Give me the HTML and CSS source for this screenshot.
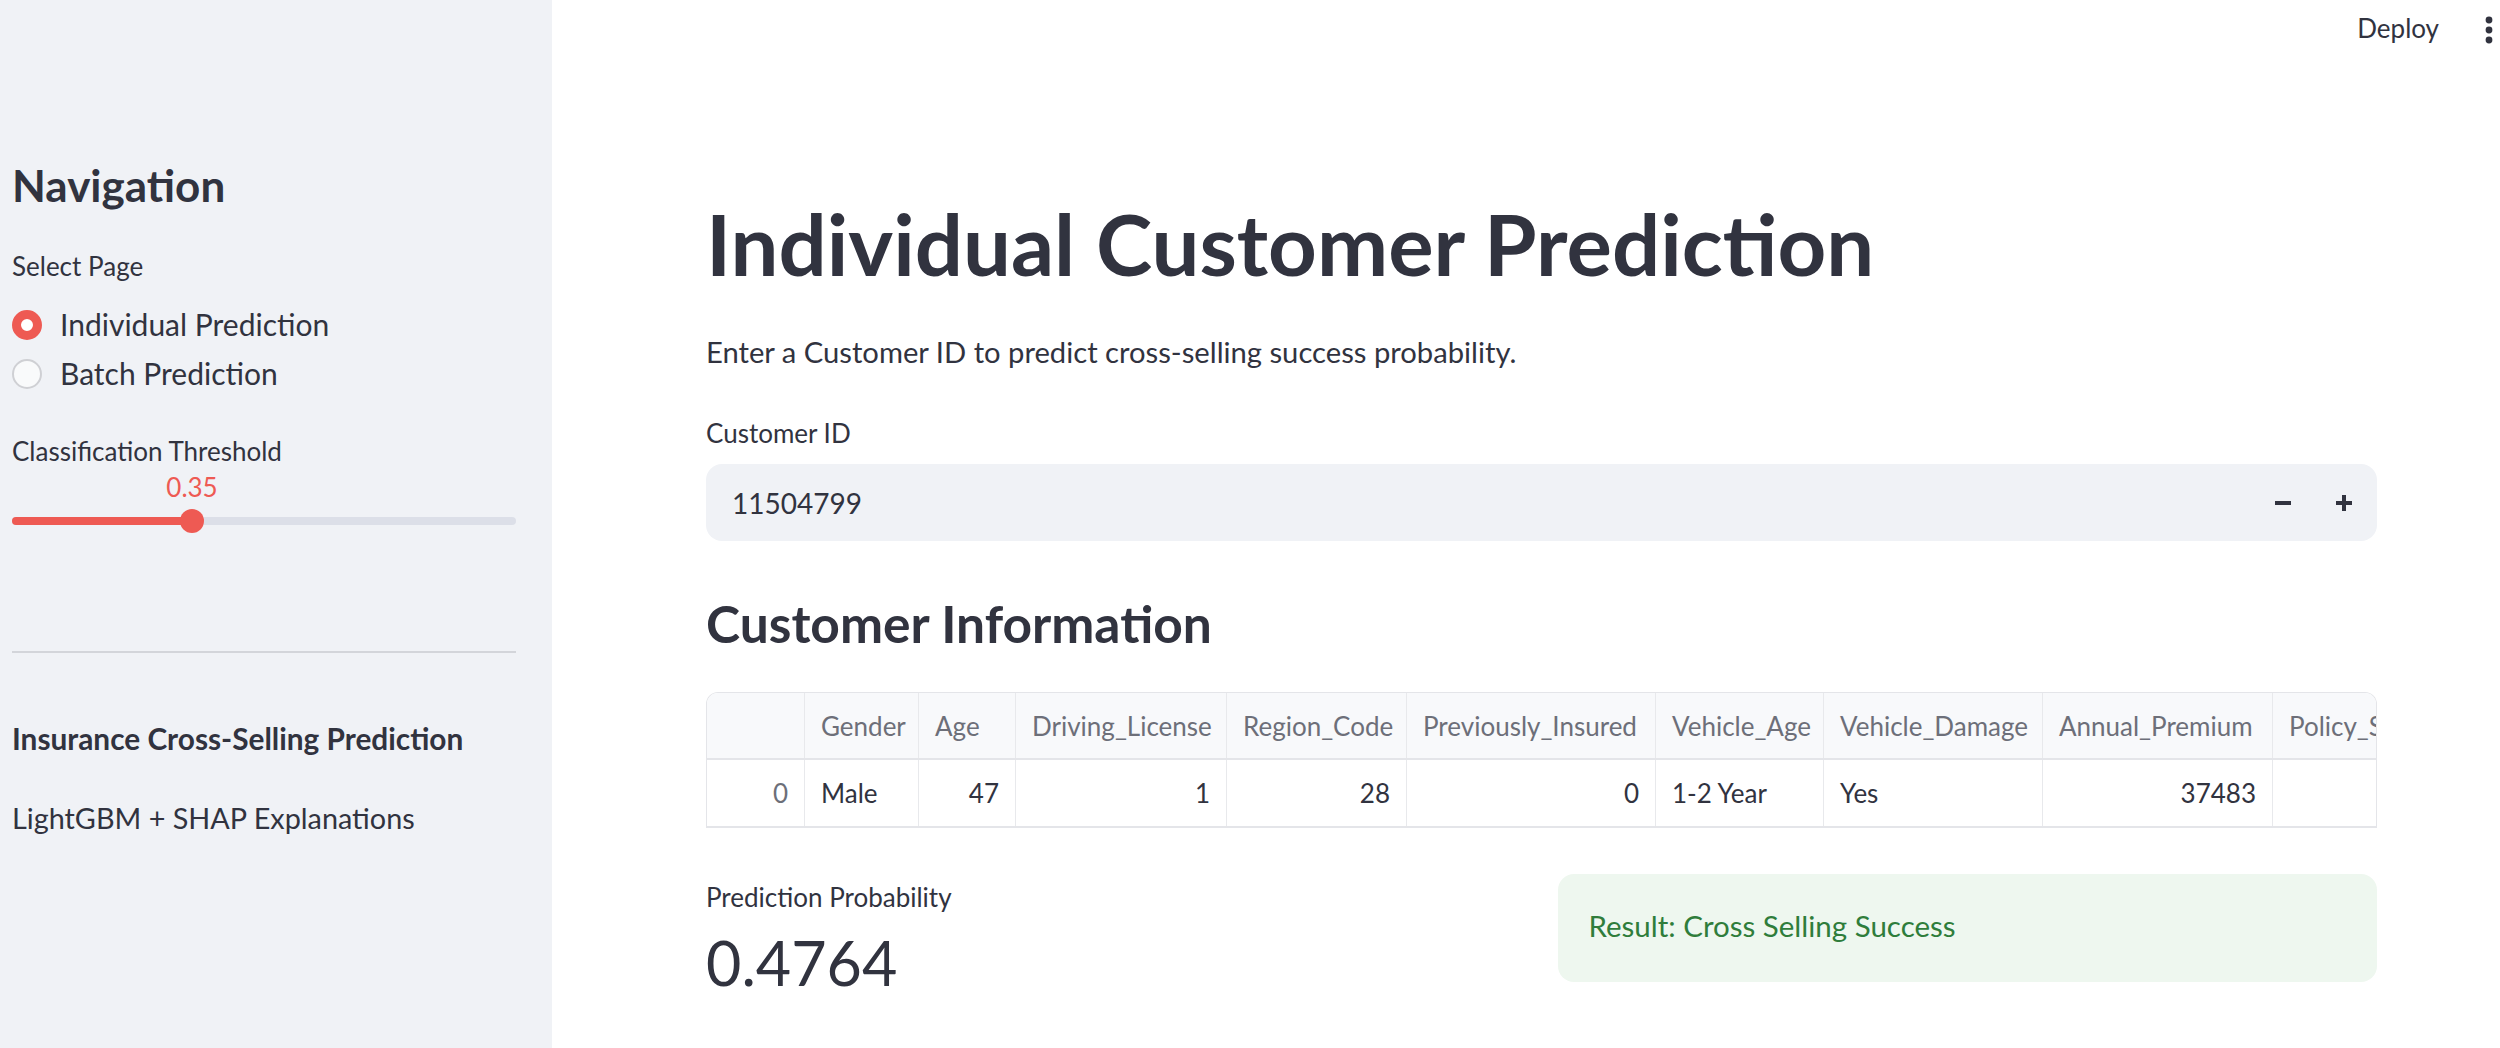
FILE: index.html
```html
<!DOCTYPE html>
<html lang="en">
<head>
<meta charset="utf-8">
<title>Individual Customer Prediction</title>
<link rel="stylesheet" href="styles.css">
</head>
<body>
<div class="app">
  <aside class="sidebar">
    <h2 class="side-title">Navigation</h2>
    <div class="label sel-label">Select Page</div>
    <div class="radios">
      <div class="radio-row"><span class="radio on"></span><span>Individual Prediction</span></div>
      <div class="radio-row"><span class="radio"></span><span>Batch Prediction</span></div>
    </div>
    <div class="label thr-label">Classification Threshold</div>
    <div class="slider" style="--v: 0.35">
      <div class="slider-value-row"><span class="slider-value">0.35</span></div>
      <div class="track"><div class="fill"></div><div class="thumb"></div></div>
    </div>
    <hr class="side-hr">
    <p class="side-strong">Insurance Cross-Selling Prediction</p>
    <p class="side-text">LightGBM + SHAP Explanations</p>
  </aside>
  <main class="main">
    <header class="topbar">
      <span class="deploy">Deploy</span>
      <svg class="dots" width="8" height="30" viewBox="0 0 8 30"><circle cx="4" cy="5" r="3.4"/><circle cx="4" cy="15" r="3.4"/><circle cx="4" cy="25" r="3.4"/></svg>
    </header>
    <div class="content">
      <h1 class="title">Individual Customer Prediction</h1>
      <p class="intro">Enter a Customer ID to predict cross-selling success probability.</p>
      <div class="label id-label">Customer ID</div>
      <div class="number-input">
        <span class="num-value">11504799</span>
        <span class="steppers">
          <svg width="16" height="16" viewBox="0 0 16 16"><rect x="0" y="6" width="16" height="4"/></svg>
          <svg width="16" height="16" viewBox="0 0 16 16"><rect x="0" y="6" width="16" height="4"/><rect x="6" y="0" width="4" height="16"/></svg>
        </span>
      </div>
      <h3 class="subheader">Customer Information</h3>
      <div class="table">
        <div class="trow head">
          <div class="cell c-idx"></div>
          <div class="cell c1">Gender</div>
          <div class="cell c2">Age</div>
          <div class="cell c3">Driving_License</div>
          <div class="cell c4">Region_Code</div>
          <div class="cell c5">Previously_Insured</div>
          <div class="cell c6">Vehicle_Age</div>
          <div class="cell c7">Vehicle_Damage</div>
          <div class="cell c8">Annual_Premium</div>
          <div class="cell c9">Policy_Sales_Channel</div>
        </div>
        <div class="trow body">
          <div class="cell c-idx num idx">0</div>
          <div class="cell c1">Male</div>
          <div class="cell c2 num">47</div>
          <div class="cell c3 num">1</div>
          <div class="cell c4 num">28</div>
          <div class="cell c5 num">0</div>
          <div class="cell c6">1-2 Year</div>
          <div class="cell c7">Yes</div>
          <div class="cell c8 num">37483</div>
          <div class="cell c9 num">124</div>
        </div>
      </div>
      <div class="results">
        <div class="metric">
          <div class="label metric-label">Prediction Probability</div>
          <div class="metric-value">0.4764</div>
        </div>
        <div class="success">Result: Cross Selling Success</div>
      </div>
    </div>
  </main>
</div>
</body>
</html>
```
FILE: styles.css
```css
* { box-sizing: border-box; }
html, body { margin: 0; padding: 0; }
body {
  font-family: "Lato", "Liberation Sans", sans-serif;
  color: #31333f;
  background: #ffffff;
  width: 2500px;
  height: 1048px;
  overflow: hidden;
}
h1, h2, h3, p { margin: 0; font-weight: normal; }

.app { display: flex; height: 1048px; }

/* Sidebar */
.sidebar {
  width: 552px;
  flex: none;
  background: #f0f2f6;
  padding: 0 36px 0 12px;
}
.side-title {
  font-size: 44px;
  font-weight: 700;
  line-height: 55px;
  margin-top: 158px;
}
.label {
  font-size: 26px;
  line-height: 32px;
}
.sel-label { margin-top: 37px; }
.radios { margin-top: 18px; }
.radio-row {
  display: flex;
  align-items: center;
  height: 49px;
  line-height: 49px;
  font-size: 30px;
}
.radio {
  width: 30px;
  height: 30px;
  border-radius: 50%;
  background: #f9fafb;
  border: 2px solid #cfd0d4;
  margin-right: 18px;
  flex: none;
}
.radio.on {
  background: #ffffff;
  border: 9px solid #ee5a53;
}
.thr-label { margin-top: 37px; }
.slider { position: relative; margin-top: 4px; }
.slider-value-row { height: 32px; position: relative; }
.slider-value {
  position: absolute;
  top: 0;
  left: calc(12px + var(--v) * (100% - 24px));
  transform: translateX(-50%);
  font-size: 26px;
  line-height: 32px;
  color: #ee5a53;
}
.track {
  position: relative;
  margin-top: 14px;
  height: 8px;
  border-radius: 4px;
  background: #dcdfe8;
}
.fill {
  height: 8px;
  border-radius: 4px;
  background: #ee5a53;
  width: calc(12px + var(--v) * (100% - 24px));
}
.thumb {
  position: absolute;
  top: -8px;
  left: calc(var(--v) * (100% - 24px));
  width: 24px;
  height: 24px;
  border-radius: 50%;
  background: #ee5a53;
}
.side-hr {
  margin: 126px 0 0 0;
  border: none;
  height: 2px;
  background: #d3d5da;
}
.side-strong {
  font-size: 29.8px;
  font-weight: 700;
  line-height: 36px;
  margin-top: 68px;
}
.side-text {
  font-size: 28.8px;
  line-height: 36px;
  margin-top: 43px;
}

/* Main */
.main { flex: 1; min-width: 0; background: #ffffff; }
.topbar {
  height: 80px;
  display: flex;
  justify-content: flex-end;
  align-items: flex-start;
  padding: 12px 7px 0 0;
}
.deploy {
  font-size: 26px;
  line-height: 32px;
  margin-right: 46px;
}
.dots { fill: #31333f; margin-top: 3px; }

.content { padding: 0 123px 0 154px; }
.title {
  font-size: 85px;
  font-weight: 700;
  line-height: 101px;
  margin-top: 113px;
}
.intro {
  font-size: 29.2px;
  line-height: 36px;
  margin-top: 40px;
}
.id-label { margin-top: 47px; }
.number-input {
  margin-top: 15px;
  height: 77px;
  border-radius: 16px;
  background: #f0f2f6;
  display: flex;
  align-items: center;
  justify-content: space-between;
  padding: 0 25px 0 26px;
}
.num-value { font-size: 28px; line-height: 36px; }
.steppers { display: flex; align-items: center; gap: 45px; fill: #31333f; }
.steppers svg { display: block; }

.subheader {
  font-size: 51.5px;
  font-weight: 700;
  line-height: 65px;
  margin-top: 50px;
}
.table {
  margin-top: 36px;
  border: 1px solid #e4e5e9;
  border-bottom: 2px solid #e4e5e9;
  border-radius: 12px 12px 0 0;
  overflow: hidden;
  font-size: 26px;
}
.trow { display: flex; white-space: nowrap; }
.trow.head {
  height: 67px;
  background: #f8f9fb;
  color: #6d6f79;
  border-bottom: 2px solid #e4e5e9;
}
.trow.body { height: 66px; background: #ffffff; }
.cell {
  flex: none;
  display: flex;
  align-items: center;
  padding: 0 16px;
  border-right: 1px solid #e8e9ec;
  overflow: hidden;
}
.cell.num { justify-content: flex-end; }
.cell.idx { color: #6d6f79; }
.c-idx { width: 98px; }
.c1 { width: 114px; }
.c2 { width: 97px; }
.c3 { width: 211px; }
.c4 { width: 180px; }
.c5 { width: 249px; }
.c6 { width: 168px; }
.c7 { width: 219px; }
.c8 { width: 230px; }
.c9 { width: 290px; }

.results {
  margin-top: 46px;
  display: grid;
  grid-template-columns: 1fr 1fr;
  column-gap: 32px;
}
.metric-label { margin-top: 7px; }
.metric-value {
  font-size: 61px;
  line-height: 83px;
  margin-top: 8px;
}
.success {
  height: 108px;
  border-radius: 16px;
  background: #eef7ef;
  color: #2f7d3b;
  font-size: 29.5px;
  line-height: 36px;
  padding: 34px 31px;
}
```
